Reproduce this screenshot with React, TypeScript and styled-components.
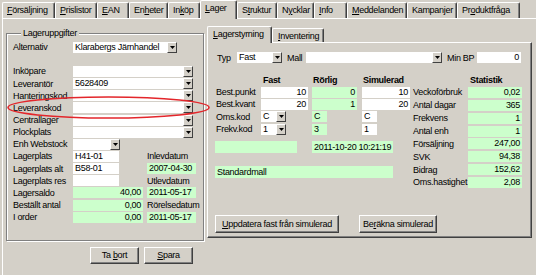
import React from 'react';
import styled, { createGlobalStyle } from 'styled-components';

const GlobalStyle = createGlobalStyle`
  html, body { margin: 0; padding: 0; background: #d4d0c8; }
  body {
    font-family: "Liberation Sans", Arial, sans-serif;
    font-size: 9px;
    letter-spacing: -0.3px;
    color: #000;
  }
  * { box-sizing: border-box; }
`;

const GREEN = '#ccffcc';
const FACE = '#d4d0c8';

const Window = styled.div`
  position: relative;
  width: 536px;
  height: 275px;
  overflow: hidden;
  background: ${FACE};
`;

const TabStrip = styled.div`
  display: flex;
  align-items: flex-end;
  height: 18px;
  padding-left: 2px;
`;

const Tab = styled.div<{ $w: number; $active?: boolean }>`
  position: relative;
  z-index: ${p => (p.$active ? 1 : 0)};
  width: ${p => p.$w}px;
  height: ${p => (p.$active ? 19 : 16)}px;
  margin-bottom: ${p => (p.$active ? -1 : 0)}px;
  border-top: 1px solid #fff;
  border-left: 1px solid #fff;
  border-right: 1px solid #404040;
  box-shadow: inset -1px 0 0 #808080;
  border-radius: 2px 2px 0 0;
  padding-left: 4px;
  line-height: ${p => (p.$active ? 15 : 14)}px;
  background: ${FACE};
  white-space: nowrap;
  overflow: hidden;
`;

const Page = styled.div`
  margin-left: 2px;
  height: 257px;
  border-top: 1px solid #fff;
  border-left: 1px solid #fff;
  display: flex;
  flex-direction: column;
`;

const Body = styled.div`
  display: flex;
  align-items: flex-start;
  padding-top: 7px;
`;

const LeftCol = styled.div`
  display: flex;
  flex-direction: column;
`;

const Group = styled.fieldset`
  margin: 2px 0 0 3px;
  width: 198px;
  height: 213px;
  border: 1px solid #808080;
  box-shadow: 1px 1px 0 #fff, inset 1px 1px 0 #fff;
  padding: 2px 0 0 6px;
  min-width: 0;
`;

const Legend = styled.legend`
  margin-left: 8px;
  padding: 0 2px;
  line-height: 11px;
  background: ${FACE};
`;

const FormGrid = styled.div`
  display: grid;
  grid-template-columns: 60px 130px;
  grid-auto-rows: 12.17px;
  align-items: center;
`;

const Label = styled.div<{ $ml?: number; $w?: number; $bold?: boolean; $pl?: number }>`
  margin-left: ${p => p.$ml ?? 0}px;
  padding-left: ${p => p.$pl ?? 0}px;
  ${p => (p.$w ? `width: ${p.$w}px; flex: none;` : '')}
  font-weight: ${p => (p.$bold ? 'bold' : 'normal')};
  white-space: nowrap;
  line-height: 12px;
`;

const Cell = styled.div`
  display: flex;
  align-items: center;
`;

const Field = styled.div<{ $w: number; $h?: number; $green?: boolean; $right?: boolean; $ml?: number }>`
  flex: none;
  width: ${p => p.$w}px;
  height: ${p => p.$h ?? 11}px;
  margin-left: ${p => p.$ml ?? 0}px;
  background: ${p => (p.$green ? GREEN : '#fff')};
  line-height: ${p => p.$h ?? 11}px;
  padding: 0 2px;
  text-align: ${p => (p.$right ? 'right' : 'left')};
  white-space: nowrap;
  overflow: hidden;
`;

const ComboBox = styled.div<{ $w: number; $ml?: number }>`
  flex: none;
  display: flex;
  width: ${p => p.$w}px;
  height: 11px;
  margin-left: ${p => p.$ml ?? 0}px;
  background: #fff;
`;

const ComboText = styled.div`
  flex: 1;
  padding-left: 2px;
  line-height: 11px;
  white-space: nowrap;
  overflow: hidden;
`;

const DropBtn = styled.div`
  flex: none;
  width: 10px;
  height: 11px;
  background: ${FACE};
  border-top: 1px solid #fff;
  border-left: 1px solid #fff;
  border-right: 1px solid #404040;
  border-bottom: 1px solid #404040;
  display: flex;
  align-items: center;
  justify-content: center;
`;

const Combo: React.FC<{ w: number; text?: string; ml?: number }> = ({ w, text, ml }) => (
  <ComboBox $w={w} $ml={ml}>
    <ComboText>{text}</ComboText>
    <DropBtn>
      <svg width="5" height="3" viewBox="0 0 5 3">
        <polygon points="0,0 5,0 2.5,3" fill="#000" />
      </svg>
    </DropBtn>
  </ComboBox>
);

const ButtonRow = styled.div<{ $mt: number; $pl?: number; $gap: number }>`
  display: flex;
  margin-top: ${p => p.$mt}px;
  padding-left: ${p => p.$pl ?? 0}px;
  gap: ${p => p.$gap}px;
`;

const Button = styled.div<{ $w: number; $h: number }>`
  width: ${p => p.$w}px;
  height: ${p => p.$h}px;
  background: ${FACE};
  border-top: 1px solid #fff;
  border-left: 1px solid #fff;
  border-right: 1px solid #404040;
  border-bottom: 1px solid #404040;
  box-shadow: inset -1px -1px 0 #808080;
  text-align: center;
  line-height: ${p => p.$h - 2}px;
  white-space: nowrap;
`;

const RightCol = styled.div`
  margin-left: 3px;
  display: flex;
  flex-direction: column;
`;

const InnerTabs = styled.div`
  display: flex;
  align-items: flex-end;
  height: 16px;
`;

const InnerTab = styled.div<{ $w: number; $active?: boolean }>`
  position: relative;
  z-index: ${p => (p.$active ? 1 : 0)};
  width: ${p => p.$w}px;
  height: ${p => (p.$active ? 17 : 14)}px;
  margin-bottom: ${p => (p.$active ? -1 : 0)}px;
  border-top: 1px solid #fff;
  border-left: 1px solid #fff;
  border-right: 1px solid #404040;
  box-shadow: inset -1px 0 0 #808080;
  border-radius: 2px 2px 0 0;
  padding-left: 5px;
  line-height: 14px;
  background: ${FACE};
  white-space: nowrap;
`;

const Panel = styled.div`
  width: 325px;
  height: 196px;
  border-top: 1px solid #fff;
  border-left: 1px solid #fff;
  border-right: 1px solid #404040;
  border-bottom: 1px solid #404040;
  box-shadow: inset -1px -1px 0 #808080;
  padding: 9px 0 0 7px;
  display: flex;
  flex-direction: column;
`;

const TypRow = styled.div`
  display: flex;
  align-items: center;
  height: 11px;
`;

const Columns = styled.div`
  display: flex;
  align-items: flex-start;
  margin-top: 11px;
`;

const LeftBlock = styled.div`
  width: 195px;
  display: flex;
  flex-direction: column;
`;

const GridCols = styled.div<{ $rows?: number }>`
  display: grid;
  grid-template-columns: 46px 51px 50px 48px;
  grid-auto-rows: ${p => p.$rows ?? 12.3}px;
  align-items: center;
`;

const FreeRow = styled.div<{ $mt: number }>`
  display: flex;
  margin-top: ${p => p.$mt}px;
`;

const StatBlock = styled.div`
  margin-left: 3px;
  width: 109px;
  display: flex;
  flex-direction: column;
`;

const StatGrid = styled.div`
  display: grid;
  grid-template-columns: 55px 54px;
  grid-auto-rows: 12.86px;
  align-items: center;
`;

const HeadRow = styled.div`
  height: 12px;
`;

const Ellipse = styled.svg`
  position: absolute;
  left: 7px;
  top: 96px;
  pointer-events: none;
`;

const topTabs: { t: React.ReactNode; w: number; active?: boolean }[] = [
  { t: <><u>F</u>örsäljning</>, w: 53 },
  { t: <><u>P</u>rislistor</>, w: 42 },
  { t: <><u>E</u>AN</>, w: 32 },
  { t: <>En<u>h</u>eter</>, w: 39 },
  { t: <>In<u>k</u>öp</>, w: 32 },
  { t: <><u>L</u>ager</>, w: 37, active: true },
  { t: <>S<u>t</u>ruktur</>, w: 40 },
  { t: <>N<u>y</u>cklar</>, w: 37 },
  { t: <><u>I</u>nfo</>, w: 33 },
  { t: <><u>M</u>eddelanden</>, w: 60 },
  { t: <>Kampan<u>j</u>er</>, w: 50 },
  { t: <>Pr<u>o</u>duktfråga</>, w: 63 },
];

const stats: [string, string][] = [
  ['Veckoförbruk', '0,02'],
  ['Antal dagar', '365'],
  ['Frekvens', '1'],
  ['Antal enh', '1'],
  ['Försäljning', '247,00'],
  ['SVK', '94,38'],
  ['Bidrag', '152,62'],
  ['Oms.hastighet', '2,08'],
];

export default function App() {
  return (
    <Window>
      <GlobalStyle />
      <TabStrip>
        {topTabs.map((tab, i) => (
          <Tab key={i} $w={tab.w} $active={tab.active}>
            {tab.t}
          </Tab>
        ))}
      </TabStrip>
      <Page>
        <Body>
          <LeftCol>
            <Group>
              <Legend>Lageruppgifter</Legend>
              <FormGrid>
                <Label>Alternativ</Label>
                <Cell><Combo w={104} text="Klarabergs Järnhandel" /></Cell>
                <Label />
                <Cell />
                <Label>Inköpare</Label>
                <Cell><Combo w={120} /></Cell>
                <Label>Leverantör</Label>
                <Cell><Combo w={120} text="5628409" /></Cell>
                <Label>Hanteringskod</Label>
                <Cell><Combo w={120} /></Cell>
                <Label>Leveranskod</Label>
                <Cell><Combo w={120} /></Cell>
                <Label>Centrallager</Label>
                <Cell><Combo w={120} /></Cell>
                <Label>Plockplats</Label>
                <Cell><Combo w={120} /></Cell>
                <Label>Enh Webstock</Label>
                <Cell><Combo w={47} /></Cell>
                <Label>Lagerplats</Label>
                <Cell>
                  <Field $w={46}>H41-01</Field>
                  <Label $ml={28}>Inlevdatum</Label>
                </Cell>
                <Label>Lagerplats alt</Label>
                <Cell>
                  <Field $w={46}>B58-01</Field>
                  <Field $w={49} $green $ml={28}>2007-04-30</Field>
                </Cell>
                <Label>Lagerplats res</Label>
                <Cell>
                  <Field $w={46} />
                  <Label $ml={28}>Utlevdatum</Label>
                </Cell>
                <Label>Lagersaldo</Label>
                <Cell>
                  <Field $w={70} $green $right>40,00</Field>
                  <Field $w={49} $green $ml={4}>2011-05-17</Field>
                </Cell>
                <Label>Beställt antal</Label>
                <Cell>
                  <Field $w={70} $green $right>0,00</Field>
                  <Label $ml={4}>Rörelsedatum</Label>
                </Cell>
                <Label>I order</Label>
                <Cell>
                  <Field $w={70} $green $right>0,00</Field>
                  <Field $w={49} $green $ml={4}>2011-05-17</Field>
                </Cell>
              </FormGrid>
            </Group>
            <ButtonRow $mt={6} $pl={87} $gap={5}>
              <Button $w={49} $h={17}>Ta <u>b</u>ort</Button>
              <Button $w={49} $h={17}><u>S</u>para</Button>
            </ButtonRow>
          </LeftCol>

          <RightCol>
            <InnerTabs>
              <InnerTab $w={65} $active><u>L</u>agerstyrning</InnerTab>
              <InnerTab $w={52}><u>I</u>nventering</InnerTab>
            </InnerTabs>
            <Panel>
              <TypRow>
                <Label $w={22} $pl={2}>Typ</Label>
                <Combo w={45} text="Fast" />
                <Label $ml={5} $w={19}>Mall</Label>
                <Combo w={136} />
                <Label $ml={5} $w={30}>Min BP</Label>
                <Field $w={44} $right>0</Field>
              </TypRow>
              <Columns>
                <LeftBlock>
                  <HeadRow>
                    <GridCols $rows={12}>
                      <Label />
                      <Label $bold $pl={2}>Fast</Label>
                      <Label $bold $pl={1}>Rörlig</Label>
                      <Label $bold $pl={1}>Simulerad</Label>
                    </GridCols>
                  </HeadRow>
                  <GridCols>
                    <Label $pl={1}>Best.punkt</Label>
                    <Cell><Field $w={47} $right>10</Field></Cell>
                    <Cell><Field $w={45} $green $right>0</Field></Cell>
                    <Cell><Field $w={48} $right>10</Field></Cell>

                    <Label $pl={1}>Best.kvant</Label>
                    <Cell><Field $w={47} $right>20</Field></Cell>
                    <Cell><Field $w={45} $green $right>1</Field></Cell>
                    <Cell><Field $w={48} $right>20</Field></Cell>

                    <Label $pl={1}>Oms.kod</Label>
                    <Cell><Combo w={25} text="C" /></Cell>
                    <Cell><Field $w={15} $green>C</Field></Cell>
                    <Cell><Field $w={15}>C</Field></Cell>

                    <Label $pl={1}>Frekv.kod</Label>
                    <Cell><Combo w={25} text="1" /></Cell>
                    <Cell><Field $w={15} $green>3</Field></Cell>
                    <Cell><Field $w={15}>1</Field></Cell>
                  </GridCols>
                  <FreeRow $mt={6}>
                    <Field $w={82} $h={12} $green />
                    <Field $w={81} $h={12} $green $ml={15}>2011-10-20 10:21:19</Field>
                  </FreeRow>
                  <FreeRow $mt={13}>
                    <Field $w={178} $h={12} $green>Standardmall</Field>
                  </FreeRow>
                </LeftBlock>
                <StatBlock>
                  <HeadRow>
                    <Label $bold $pl={57}>Statistik</Label>
                  </HeadRow>
                  <StatGrid>
                    {stats.map(([k, v]) => (
                      <React.Fragment key={k}>
                        <Label>{k}</Label>
                        <Cell><Field $w={54} $green $right>{v}</Field></Cell>
                      </React.Fragment>
                    ))}
                  </StatGrid>
                </StatBlock>
              </Columns>
              <ButtonRow $mt={26} $gap={20}>
                <Button $w={124} $h={18}><u>U</u>ppdatera fast från simulerad</Button>
                <Button $w={78} $h={18}>Be<u>r</u>äkna simulerad</Button>
              </ButtonRow>
            </Panel>
          </RightCol>
        </Body>
      </Page>
      <Ellipse width="203" height="23" viewBox="0 0 203 23">
        <ellipse cx="101.5" cy="11.5" rx="100.5" ry="10.5" fill="none" stroke="#e3262b" strokeWidth="1.6" />
      </Ellipse>
    </Window>
  );
}
